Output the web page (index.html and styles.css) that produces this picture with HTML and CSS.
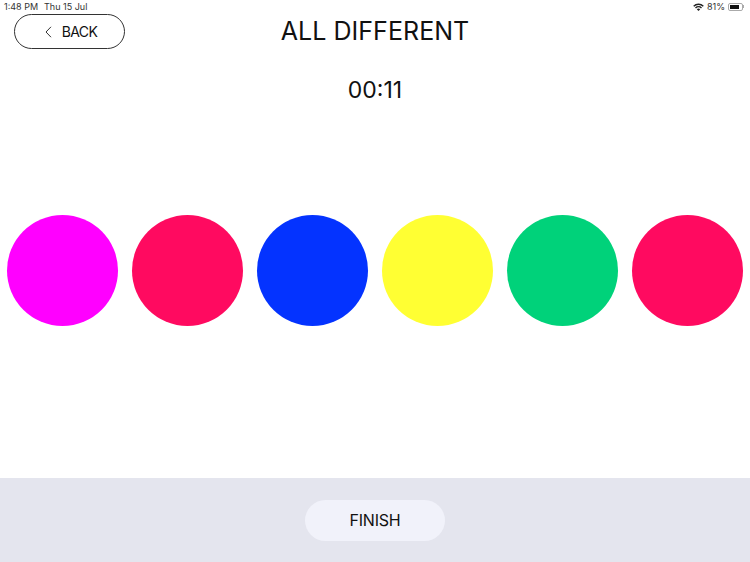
FILE: index.html
```html
<!DOCTYPE html>
<html lang="en">
<head>
  <meta charset="UTF-8">
  <title>All Different</title>
  <link rel="stylesheet" href="styles.css">
</head>
<body>
  <div class="status-bar">
    <div class="status-left">
      <span>1:48 PM</span>
      <span>Thu 15 Jul</span>
    </div>
    <div class="status-right">
      <svg class="wifi" width="11" height="8" viewBox="0 0 11 8">
        <path d="M0.2 2.7A7.4 7.4 0 0 1 10.8 2.7L9.8 3.8A6 6 0 0 0 1.2 3.8Z" fill="#222"/>
        <path d="M2 4.5A4.9 4.9 0 0 1 9 4.5L8 5.6A3.5 3.5 0 0 0 3 5.6Z" fill="#222"/>
        <path d="M3.8 6.3A2.4 2.4 0 0 1 7.2 6.3L5.5 8Z" fill="#222"/>
      </svg>
      <span>81%</span>
      <div class="battery"><div class="battery-level"></div></div>
      <div class="battery-tip"></div>
    </div>
  </div>

  <div class="header">
    <a href="#" class="btn-back">
      <svg width="7" height="12" viewBox="0 0 7 12">
        <path d="M6 0.8L1 6L6 11.2" fill="none" stroke="#333" stroke-width="1"/>
      </svg>
      <span>BACK</span>
    </a>
    <h1>ALL DIFFERENT</h1>
  </div>

  <div class="timer">00:11</div>

  <div class="circles">
    <div class="circle magenta"></div>
    <div class="circle red"></div>
    <div class="circle blue"></div>
    <div class="circle yellow"></div>
    <div class="circle green"></div>
    <div class="circle red"></div>
  </div>

  <div class="footer">
    <button class="btn-finish">FINISH</button>
  </div>
</body>
</html>
```

FILE: styles.css
```css
html, body {
  height: 100%;
}

body {
  margin: 0;
  background: #fff;
  color: #111;
  font-family: 'Inter', 'Liberation Sans', sans-serif;
  display: flex;
  flex-direction: column;
  overflow: hidden;
}

.status-bar {
  height: 13px;
  margin-bottom: 1px;
  padding: 0 6px 0 4px;
  display: flex;
  justify-content: space-between;
  align-items: center;
  font-size: 9px;
  color: #333;
}

.status-left {
  display: flex;
  gap: 6px;
}

.status-right {
  display: flex;
  align-items: center;
  gap: 3px;
}

.battery {
  width: 15px;
  height: 8px;
  padding: 1px;
  border: 1px solid #aaa;
  border-radius: 2px;
  box-sizing: border-box;
}

.battery-level {
  width: 81%;
  height: 100%;
  background: #111;
}

.battery-tip {
  width: 1px;
  height: 3px;
  margin-left: -3px;
  background: #aaa;
}

.header {
  height: 35px;
  padding: 0 14px;
  display: grid;
  grid-template-columns: 111px 1fr 111px;
  align-items: center;
}

.btn-back {
  height: 35px;
  box-sizing: border-box;
  border: 1px solid #333;
  border-radius: 18px;
  display: flex;
  justify-content: center;
  align-items: center;
  gap: 10px;
  padding-left: 3px;
  text-decoration: none;
  color: #111;
  font-size: 14px;
  letter-spacing: -0.6px;
}

h1 {
  margin: -2px 0 0;
  text-align: center;
  font-size: 25px;
  font-weight: 400;
  letter-spacing: 0.05px;
}

.timer {
  margin-top: 26px;
  text-align: center;
  font-size: 23px;
  line-height: 30px;
}

.circles {
  flex: 1;
  padding: 0 7px;
  display: flex;
  justify-content: space-between;
  align-items: flex-start;
  margin-top: 110px;
}

.circle {
  width: 111px;
  height: 111px;
  border-radius: 50%;
}

.magenta { background: #ff00ff; }
.red { background: #ff0a60; }
.blue { background: #0433ff; }
.yellow { background: #ffff33; }
.green { background: #00d27a; }

.footer {
  height: 84px;
  background: #e4e5ee;
  display: flex;
  justify-content: center;
  align-items: center;
  padding-top: 1px;
  box-sizing: border-box;
}

.btn-finish {
  width: 140px;
  height: 41px;
  padding: 0 0 2px;
  border: none;
  border-radius: 21px;
  background: #f1f2fa;
  color: #111;
  font-family: inherit;
  font-size: 16px;
  letter-spacing: -0.2px;
  cursor: pointer;
}
```
